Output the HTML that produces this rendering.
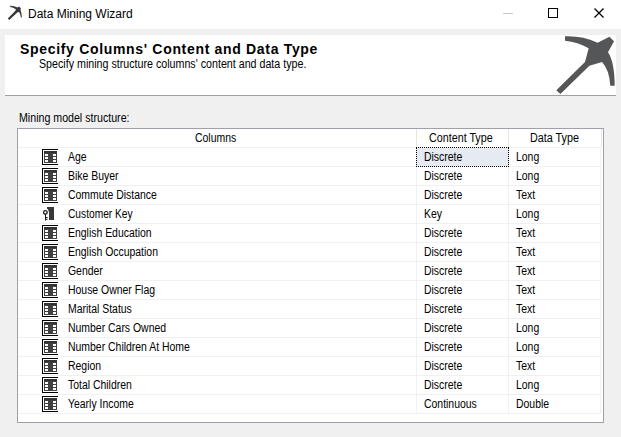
<!DOCTYPE html><html><head><meta charset="utf-8"><style>
html,body{margin:0;padding:0;}
body{width:621px;height:437px;position:relative;overflow:hidden;background:#f0f0f0;font-family:"Liberation Sans",sans-serif;}
.abs{position:absolute;}
.t{position:absolute;font-size:12px;line-height:14px;white-space:nowrap;color:#000;transform-origin:0 0;}
.ic{position:absolute;}
</style></head><body>
<div class="abs" style="left:0;top:0;width:621px;height:29px;background:#fff"></div>
<svg class="abs" style="left:0;top:0" width="30" height="29" viewBox="0 0 30 29"><path d="M9.8 5.8 Q14 5.6 17.6 7.5 L19.1 6.6 L21 8.4 L20.4 9.8 Q21.8 13 21.9 17.6 L20.9 17.4 Q20.5 14 19.1 12 L17.6 12.2 L9.3 20 L7.8 18.4 L15.6 10.6 L15.8 9.2 Q13 7 10.5 6.9 Z" fill="#383838"/></svg>
<div class="t" style="left:28px;top:7px;transform:scaleX(1.0)">Data Mining Wizard</div>
<div class="abs" style="left:503px;top:13px;width:10px;height:1px;background:#c8c8c8"></div>
<div class="abs" style="left:548px;top:8px;width:8px;height:8px;border:1px solid #000"></div>
<svg class="abs" style="left:590px;top:4px" width="18" height="18" viewBox="0 0 18 18"><path d="M4.5 4.5 L13.5 13.5 M13.5 4.5 L4.5 13.5" stroke="#000" stroke-width="1.3"/></svg>
<div class="abs" style="left:5px;top:35px;width:611px;height:60px;background:#fff"></div>
<div class="abs" style="left:5px;top:95px;width:611px;height:1px;background:#a0a0a0"></div>
<div class="t" style="left:20px;top:41px;font-size:14px;font-weight:bold;line-height:16px;letter-spacing:0.68px">Specify Columns' Content and Data Type</div>
<div class="t" style="left:39px;top:57px;transform:scaleX(0.89)">Specify mining structure columns' content and data type.</div>
<svg class="abs" style="left:0;top:0" width="621" height="100" viewBox="0 0 621 100"><path d="M565 36.3 Q582 35.5 597.6 42.7 L609.5 36.7 L614 41.2 L608 52.3 Q614.5 62 614.7 85.8 L610.3 85.8 Q609.5 70 602 62 L589.4 65.7 L560.4 94 L556.3 90.3 L585 62 L588.7 48.2 Q578 42.3 565 40.8 Z" fill="#555658"/></svg>
<div class="t" style="left:19px;top:111px;transform:scaleX(0.886)">Mining model structure:</div>
<div class="abs" style="left:17px;top:128px;width:585px;height:293px;border:1px solid #a0a0a8;background:#fff"></div>
<div class="abs" style="left:416px;top:129px;width:1px;height:18px;background:#e5e5e5"></div>
<div class="abs" style="left:508px;top:129px;width:1px;height:18px;background:#e5e5e5"></div>
<div class="abs" style="left:601px;top:129px;width:1px;height:18px;background:#e5e5e5"></div>
<div class="t" style="left:195px;top:131px;transform:scaleX(0.87)">Columns</div>
<div class="t" style="left:429px;top:131px;transform:scaleX(0.895)">Content Type</div>
<div class="t" style="left:530px;top:131px;transform:scaleX(0.9)">Data Type</div>
<div class="abs" style="left:18px;top:147px;width:583px;height:1px;background:#f0f0f0"></div>
<div class="abs" style="left:18px;top:166px;width:583px;height:1px;background:#f0f0f0"></div>
<div class="abs" style="left:18px;top:185px;width:583px;height:1px;background:#f0f0f0"></div>
<div class="abs" style="left:18px;top:204px;width:583px;height:1px;background:#f0f0f0"></div>
<div class="abs" style="left:18px;top:223px;width:583px;height:1px;background:#f0f0f0"></div>
<div class="abs" style="left:18px;top:242px;width:583px;height:1px;background:#f0f0f0"></div>
<div class="abs" style="left:18px;top:261px;width:583px;height:1px;background:#f0f0f0"></div>
<div class="abs" style="left:18px;top:280px;width:583px;height:1px;background:#f0f0f0"></div>
<div class="abs" style="left:18px;top:299px;width:583px;height:1px;background:#f0f0f0"></div>
<div class="abs" style="left:18px;top:318px;width:583px;height:1px;background:#f0f0f0"></div>
<div class="abs" style="left:18px;top:337px;width:583px;height:1px;background:#f0f0f0"></div>
<div class="abs" style="left:18px;top:356px;width:583px;height:1px;background:#f0f0f0"></div>
<div class="abs" style="left:18px;top:375px;width:583px;height:1px;background:#f0f0f0"></div>
<div class="abs" style="left:18px;top:394px;width:583px;height:1px;background:#f0f0f0"></div>
<div class="abs" style="left:18px;top:413px;width:583px;height:1px;background:#f0f0f0"></div>
<div class="abs" style="left:416px;top:147px;width:1px;height:266px;background:#f0f0f0"></div>
<div class="abs" style="left:508px;top:147px;width:1px;height:266px;background:#f0f0f0"></div>
<div class="abs" style="left:600px;top:147px;width:1px;height:267px;background:#f0f0f0"></div>
<div class="abs" style="left:416px;top:147px;width:91px;height:18px;background:#e6ebf1;border:1px dotted #000"></div>
<div class="abs" style="left:42px;top:149px"><svg class="ic" style="left:0;top:0" width="16" height="16" viewBox="0 0 16 16" shape-rendering="crispEdges">
<rect x="0" y="0" width="16" height="1" fill="#000"/><rect x="0" y="0" width="1" height="16" fill="#000"/><rect x="0" y="15" width="16" height="1" fill="#000"/>
<rect x="2" y="2" width="13" height="12" fill="#404040"/><rect x="2" y="2" width="13" height="2" fill="#333"/>
<rect x="3" y="5" width="3" height="2" fill="#fff"/><rect x="11" y="5" width="3" height="2" fill="#fff"/>
<rect x="3" y="8" width="3" height="2" fill="#fff"/><rect x="11" y="8" width="3" height="2" fill="#fff"/>
<rect x="3" y="11" width="3" height="2" fill="#fff"/><rect x="11" y="11" width="3" height="2" fill="#fff"/>
</svg></div>
<div class="t" style="left:68px;top:150px;transform:scaleX(0.87)">Age</div>
<div class="t" style="left:424px;top:150px;transform:scaleX(0.87)">Discrete</div>
<div class="t" style="left:516px;top:150px;transform:scaleX(0.87)">Long</div>
<div class="abs" style="left:42px;top:168px"><svg class="ic" style="left:0;top:0" width="16" height="16" viewBox="0 0 16 16" shape-rendering="crispEdges">
<rect x="0" y="0" width="16" height="1" fill="#000"/><rect x="0" y="0" width="1" height="16" fill="#000"/><rect x="0" y="15" width="16" height="1" fill="#000"/>
<rect x="2" y="2" width="13" height="12" fill="#404040"/><rect x="2" y="2" width="13" height="2" fill="#333"/>
<rect x="3" y="5" width="3" height="2" fill="#fff"/><rect x="11" y="5" width="3" height="2" fill="#fff"/>
<rect x="3" y="8" width="3" height="2" fill="#fff"/><rect x="11" y="8" width="3" height="2" fill="#fff"/>
<rect x="3" y="11" width="3" height="2" fill="#fff"/><rect x="11" y="11" width="3" height="2" fill="#fff"/>
</svg></div>
<div class="t" style="left:68px;top:169px;transform:scaleX(0.87)">Bike Buyer</div>
<div class="t" style="left:424px;top:169px;transform:scaleX(0.87)">Discrete</div>
<div class="t" style="left:516px;top:169px;transform:scaleX(0.87)">Long</div>
<div class="abs" style="left:42px;top:187px"><svg class="ic" style="left:0;top:0" width="16" height="16" viewBox="0 0 16 16" shape-rendering="crispEdges">
<rect x="0" y="0" width="16" height="1" fill="#000"/><rect x="0" y="0" width="1" height="16" fill="#000"/><rect x="0" y="15" width="16" height="1" fill="#000"/>
<rect x="2" y="2" width="13" height="12" fill="#404040"/><rect x="2" y="2" width="13" height="2" fill="#333"/>
<rect x="3" y="5" width="3" height="2" fill="#fff"/><rect x="11" y="5" width="3" height="2" fill="#fff"/>
<rect x="3" y="8" width="3" height="2" fill="#fff"/><rect x="11" y="8" width="3" height="2" fill="#fff"/>
<rect x="3" y="11" width="3" height="2" fill="#fff"/><rect x="11" y="11" width="3" height="2" fill="#fff"/>
</svg></div>
<div class="t" style="left:68px;top:188px;transform:scaleX(0.87)">Commute Distance</div>
<div class="t" style="left:424px;top:188px;transform:scaleX(0.87)">Discrete</div>
<div class="t" style="left:516px;top:188px;transform:scaleX(0.87)">Text</div>
<div class="abs" style="left:42px;top:206px"><svg class="ic" style="left:0;top:0" width="16" height="16" viewBox="0 0 16 16">
<path d="M5 1 H12 V14 H7 V9.5 Q7.6 5 5 2.6 Z" fill="#383838"/>
<circle cx="3.4" cy="6.4" r="1.8" fill="none" stroke="#1a1a1a" stroke-width="1.3"/>
<path d="M3.5 8.3 V14.5 M3.5 11.5 H5.6 M3.5 13.3 H5.6" stroke="#1a1a1a" stroke-width="1" fill="none"/>
</svg></div>
<div class="t" style="left:68px;top:207px;transform:scaleX(0.85)">Customer Key</div>
<div class="t" style="left:424px;top:207px;transform:scaleX(0.87)">Key</div>
<div class="t" style="left:516px;top:207px;transform:scaleX(0.87)">Long</div>
<div class="abs" style="left:42px;top:225px"><svg class="ic" style="left:0;top:0" width="16" height="16" viewBox="0 0 16 16" shape-rendering="crispEdges">
<rect x="0" y="0" width="16" height="1" fill="#000"/><rect x="0" y="0" width="1" height="16" fill="#000"/><rect x="0" y="15" width="16" height="1" fill="#000"/>
<rect x="2" y="2" width="13" height="12" fill="#404040"/><rect x="2" y="2" width="13" height="2" fill="#333"/>
<rect x="3" y="5" width="3" height="2" fill="#fff"/><rect x="11" y="5" width="3" height="2" fill="#fff"/>
<rect x="3" y="8" width="3" height="2" fill="#fff"/><rect x="11" y="8" width="3" height="2" fill="#fff"/>
<rect x="3" y="11" width="3" height="2" fill="#fff"/><rect x="11" y="11" width="3" height="2" fill="#fff"/>
</svg></div>
<div class="t" style="left:68px;top:226px;transform:scaleX(0.87)">English Education</div>
<div class="t" style="left:424px;top:226px;transform:scaleX(0.87)">Discrete</div>
<div class="t" style="left:516px;top:226px;transform:scaleX(0.87)">Text</div>
<div class="abs" style="left:42px;top:244px"><svg class="ic" style="left:0;top:0" width="16" height="16" viewBox="0 0 16 16" shape-rendering="crispEdges">
<rect x="0" y="0" width="16" height="1" fill="#000"/><rect x="0" y="0" width="1" height="16" fill="#000"/><rect x="0" y="15" width="16" height="1" fill="#000"/>
<rect x="2" y="2" width="13" height="12" fill="#404040"/><rect x="2" y="2" width="13" height="2" fill="#333"/>
<rect x="3" y="5" width="3" height="2" fill="#fff"/><rect x="11" y="5" width="3" height="2" fill="#fff"/>
<rect x="3" y="8" width="3" height="2" fill="#fff"/><rect x="11" y="8" width="3" height="2" fill="#fff"/>
<rect x="3" y="11" width="3" height="2" fill="#fff"/><rect x="11" y="11" width="3" height="2" fill="#fff"/>
</svg></div>
<div class="t" style="left:68px;top:245px;transform:scaleX(0.87)">English Occupation</div>
<div class="t" style="left:424px;top:245px;transform:scaleX(0.87)">Discrete</div>
<div class="t" style="left:516px;top:245px;transform:scaleX(0.87)">Text</div>
<div class="abs" style="left:42px;top:263px"><svg class="ic" style="left:0;top:0" width="16" height="16" viewBox="0 0 16 16" shape-rendering="crispEdges">
<rect x="0" y="0" width="16" height="1" fill="#000"/><rect x="0" y="0" width="1" height="16" fill="#000"/><rect x="0" y="15" width="16" height="1" fill="#000"/>
<rect x="2" y="2" width="13" height="12" fill="#404040"/><rect x="2" y="2" width="13" height="2" fill="#333"/>
<rect x="3" y="5" width="3" height="2" fill="#fff"/><rect x="11" y="5" width="3" height="2" fill="#fff"/>
<rect x="3" y="8" width="3" height="2" fill="#fff"/><rect x="11" y="8" width="3" height="2" fill="#fff"/>
<rect x="3" y="11" width="3" height="2" fill="#fff"/><rect x="11" y="11" width="3" height="2" fill="#fff"/>
</svg></div>
<div class="t" style="left:68px;top:264px;transform:scaleX(0.87)">Gender</div>
<div class="t" style="left:424px;top:264px;transform:scaleX(0.87)">Discrete</div>
<div class="t" style="left:516px;top:264px;transform:scaleX(0.87)">Text</div>
<div class="abs" style="left:42px;top:282px"><svg class="ic" style="left:0;top:0" width="16" height="16" viewBox="0 0 16 16" shape-rendering="crispEdges">
<rect x="0" y="0" width="16" height="1" fill="#000"/><rect x="0" y="0" width="1" height="16" fill="#000"/><rect x="0" y="15" width="16" height="1" fill="#000"/>
<rect x="2" y="2" width="13" height="12" fill="#404040"/><rect x="2" y="2" width="13" height="2" fill="#333"/>
<rect x="3" y="5" width="3" height="2" fill="#fff"/><rect x="11" y="5" width="3" height="2" fill="#fff"/>
<rect x="3" y="8" width="3" height="2" fill="#fff"/><rect x="11" y="8" width="3" height="2" fill="#fff"/>
<rect x="3" y="11" width="3" height="2" fill="#fff"/><rect x="11" y="11" width="3" height="2" fill="#fff"/>
</svg></div>
<div class="t" style="left:68px;top:283px;transform:scaleX(0.87)">House Owner Flag</div>
<div class="t" style="left:424px;top:283px;transform:scaleX(0.87)">Discrete</div>
<div class="t" style="left:516px;top:283px;transform:scaleX(0.87)">Text</div>
<div class="abs" style="left:42px;top:301px"><svg class="ic" style="left:0;top:0" width="16" height="16" viewBox="0 0 16 16" shape-rendering="crispEdges">
<rect x="0" y="0" width="16" height="1" fill="#000"/><rect x="0" y="0" width="1" height="16" fill="#000"/><rect x="0" y="15" width="16" height="1" fill="#000"/>
<rect x="2" y="2" width="13" height="12" fill="#404040"/><rect x="2" y="2" width="13" height="2" fill="#333"/>
<rect x="3" y="5" width="3" height="2" fill="#fff"/><rect x="11" y="5" width="3" height="2" fill="#fff"/>
<rect x="3" y="8" width="3" height="2" fill="#fff"/><rect x="11" y="8" width="3" height="2" fill="#fff"/>
<rect x="3" y="11" width="3" height="2" fill="#fff"/><rect x="11" y="11" width="3" height="2" fill="#fff"/>
</svg></div>
<div class="t" style="left:68px;top:302px;transform:scaleX(0.87)">Marital Status</div>
<div class="t" style="left:424px;top:302px;transform:scaleX(0.87)">Discrete</div>
<div class="t" style="left:516px;top:302px;transform:scaleX(0.87)">Text</div>
<div class="abs" style="left:42px;top:320px"><svg class="ic" style="left:0;top:0" width="16" height="16" viewBox="0 0 16 16" shape-rendering="crispEdges">
<rect x="0" y="0" width="16" height="1" fill="#000"/><rect x="0" y="0" width="1" height="16" fill="#000"/><rect x="0" y="15" width="16" height="1" fill="#000"/>
<rect x="2" y="2" width="13" height="12" fill="#404040"/><rect x="2" y="2" width="13" height="2" fill="#333"/>
<rect x="3" y="5" width="3" height="2" fill="#fff"/><rect x="11" y="5" width="3" height="2" fill="#fff"/>
<rect x="3" y="8" width="3" height="2" fill="#fff"/><rect x="11" y="8" width="3" height="2" fill="#fff"/>
<rect x="3" y="11" width="3" height="2" fill="#fff"/><rect x="11" y="11" width="3" height="2" fill="#fff"/>
</svg></div>
<div class="t" style="left:68px;top:321px;transform:scaleX(0.87)">Number Cars Owned</div>
<div class="t" style="left:424px;top:321px;transform:scaleX(0.87)">Discrete</div>
<div class="t" style="left:516px;top:321px;transform:scaleX(0.87)">Long</div>
<div class="abs" style="left:42px;top:339px"><svg class="ic" style="left:0;top:0" width="16" height="16" viewBox="0 0 16 16" shape-rendering="crispEdges">
<rect x="0" y="0" width="16" height="1" fill="#000"/><rect x="0" y="0" width="1" height="16" fill="#000"/><rect x="0" y="15" width="16" height="1" fill="#000"/>
<rect x="2" y="2" width="13" height="12" fill="#404040"/><rect x="2" y="2" width="13" height="2" fill="#333"/>
<rect x="3" y="5" width="3" height="2" fill="#fff"/><rect x="11" y="5" width="3" height="2" fill="#fff"/>
<rect x="3" y="8" width="3" height="2" fill="#fff"/><rect x="11" y="8" width="3" height="2" fill="#fff"/>
<rect x="3" y="11" width="3" height="2" fill="#fff"/><rect x="11" y="11" width="3" height="2" fill="#fff"/>
</svg></div>
<div class="t" style="left:68px;top:340px;transform:scaleX(0.87)">Number Children At Home</div>
<div class="t" style="left:424px;top:340px;transform:scaleX(0.87)">Discrete</div>
<div class="t" style="left:516px;top:340px;transform:scaleX(0.87)">Long</div>
<div class="abs" style="left:42px;top:358px"><svg class="ic" style="left:0;top:0" width="16" height="16" viewBox="0 0 16 16" shape-rendering="crispEdges">
<rect x="0" y="0" width="16" height="1" fill="#000"/><rect x="0" y="0" width="1" height="16" fill="#000"/><rect x="0" y="15" width="16" height="1" fill="#000"/>
<rect x="2" y="2" width="13" height="12" fill="#404040"/><rect x="2" y="2" width="13" height="2" fill="#333"/>
<rect x="3" y="5" width="3" height="2" fill="#fff"/><rect x="11" y="5" width="3" height="2" fill="#fff"/>
<rect x="3" y="8" width="3" height="2" fill="#fff"/><rect x="11" y="8" width="3" height="2" fill="#fff"/>
<rect x="3" y="11" width="3" height="2" fill="#fff"/><rect x="11" y="11" width="3" height="2" fill="#fff"/>
</svg></div>
<div class="t" style="left:68px;top:359px;transform:scaleX(0.87)">Region</div>
<div class="t" style="left:424px;top:359px;transform:scaleX(0.87)">Discrete</div>
<div class="t" style="left:516px;top:359px;transform:scaleX(0.87)">Text</div>
<div class="abs" style="left:42px;top:377px"><svg class="ic" style="left:0;top:0" width="16" height="16" viewBox="0 0 16 16" shape-rendering="crispEdges">
<rect x="0" y="0" width="16" height="1" fill="#000"/><rect x="0" y="0" width="1" height="16" fill="#000"/><rect x="0" y="15" width="16" height="1" fill="#000"/>
<rect x="2" y="2" width="13" height="12" fill="#404040"/><rect x="2" y="2" width="13" height="2" fill="#333"/>
<rect x="3" y="5" width="3" height="2" fill="#fff"/><rect x="11" y="5" width="3" height="2" fill="#fff"/>
<rect x="3" y="8" width="3" height="2" fill="#fff"/><rect x="11" y="8" width="3" height="2" fill="#fff"/>
<rect x="3" y="11" width="3" height="2" fill="#fff"/><rect x="11" y="11" width="3" height="2" fill="#fff"/>
</svg></div>
<div class="t" style="left:68px;top:378px;transform:scaleX(0.87)">Total Children</div>
<div class="t" style="left:424px;top:378px;transform:scaleX(0.87)">Discrete</div>
<div class="t" style="left:516px;top:378px;transform:scaleX(0.87)">Long</div>
<div class="abs" style="left:42px;top:396px"><svg class="ic" style="left:0;top:0" width="16" height="16" viewBox="0 0 16 16" shape-rendering="crispEdges">
<rect x="0" y="0" width="16" height="1" fill="#000"/><rect x="0" y="0" width="1" height="16" fill="#000"/><rect x="0" y="15" width="16" height="1" fill="#000"/>
<rect x="2" y="2" width="13" height="12" fill="#404040"/><rect x="2" y="2" width="13" height="2" fill="#333"/>
<rect x="3" y="5" width="3" height="2" fill="#fff"/><rect x="11" y="5" width="3" height="2" fill="#fff"/>
<rect x="3" y="8" width="3" height="2" fill="#fff"/><rect x="11" y="8" width="3" height="2" fill="#fff"/>
<rect x="3" y="11" width="3" height="2" fill="#fff"/><rect x="11" y="11" width="3" height="2" fill="#fff"/>
</svg></div>
<div class="t" style="left:68px;top:397px;transform:scaleX(0.87)">Yearly Income</div>
<div class="t" style="left:424px;top:397px;transform:scaleX(0.87)">Continuous</div>
<div class="t" style="left:516px;top:397px;transform:scaleX(0.87)">Double</div>
</body></html>
